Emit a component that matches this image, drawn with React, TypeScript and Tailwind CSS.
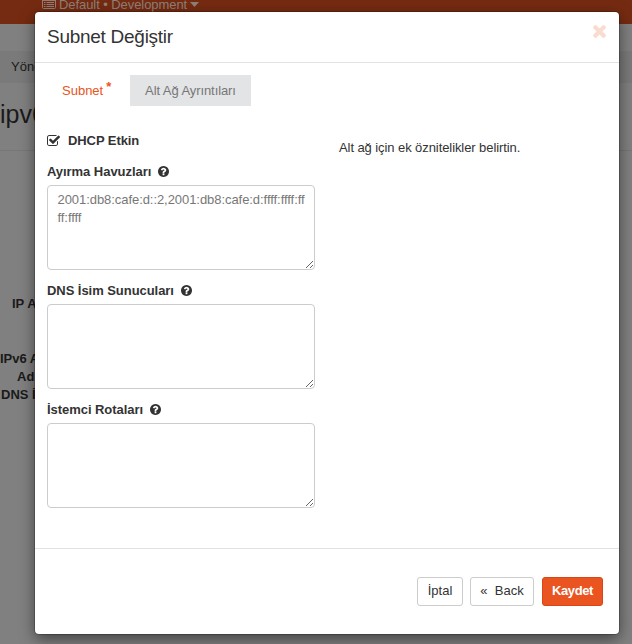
import React from "react";

const Question = () => (
  <svg viewBox="0 0 1536 1536" className="h-[11px] w-[11px] shrink-0" fill="currentColor">
    <path transform="translate(-128 -128)" d="M1024 1376v-192q0-14-9-23t-23-9h-192q-14 0-23 9t-9 23v192q0 14 9 23t23 9h192q14 0 23-9t9-23zm256-672q0-88-55.5-163t-138.5-116-170-41q-243 0-371 213-15 24 8 42l132 100q7 6 19 6 16 0 25-12 53-68 86-92 34-24 86-24 48 0 85.5 26t37.5 59q0 38-20 61t-68 45q-63 28-115.5 86.5t-52.5 125.5v36q0 14 9 23t23 9h192q14 0 23-9t9-23q0-19 21.5-49.5t54.5-49.5q32-18 49-28.5t46-35 44.5-48 28-60.5 12.5-81zm384 192q0 209-103 385.5t-279.5 279.5-385.5 103-385.5-103-279.5-279.5-103-385.5 103-385.5 279.5-279.5 385.5-103 385.5 103 279.5 279.5 103 385.5z" />
  </svg>
);

const CheckSquare = () => (
  <svg viewBox="0 0 1664 1408" className="h-[11px] w-[13px] shrink-0" fill="currentColor">
    <path transform="translate(-64 -128)" d="M1472 930v318q0 119-84.5 203.5t-203.5 84.5h-832q-119 0-203.5-84.5t-84.5-203.5v-832q0-119 84.5-203.5t203.5-84.5h832q63 0 117 25 15 7 18 23 3 17-9 29l-49 49q-10 10-23 10-3 0-9-2-23-6-45-6h-832q-66 0-113 47t-47 113v832q0 66 47 113t113 47h832q66 0 113-47t47-113v-254q0-13 9-22l64-64q10-10 23-10 6 0 12 3 20 8 20 29zm231-489l-814 814q-24 24-57 24t-57-24l-430-430q-24-24-24-57t24-57l110-110q24-24 57-24t57 24l263 263 647-647q24-24 57-24t57 24l110 110q24 24 24 57t-24 57z" />
  </svg>
);

const Close = () => (
  <svg viewBox="302 302 1188 1188" className="h-[13px] w-[13px]" fill="#fadbd0">
    <path d="M1490 1322q0 40-28 68l-136 136q-28 28-68 28t-68-28l-294-294-294 294q-28 28-68 28t-68-28l-136-136q-28-28-28-68t28-68l294-294-294-294q-28-28-28-68t28-68l136-136q28-28 68-28t68 28l294 294 294-294q28-28 68-28t68 28l136 136q28 28 28 68t-28 68l-294 294 294 294q28 28 28 68z" transform="translate(0 -64)" />
  </svg>
);

const ListIcon = () => (
  <svg viewBox="0 0 14 10" className="h-2.5 w-3.5" fill="none" stroke="currentColor">
    <rect x="0.5" y="-1.5" width="13" height="10" rx="1" />
    <path d="M0 0.5h14M2 2.5h1.5M4.5 2.5H12M2 4.5h1.5M4.5 4.5H12M2 6.5h1.5M4.5 6.5H12" />
  </svg>
);

function Field({ label, width, value }: { label: string; width: string; value?: string }) {
  return (
    <div className="h-[119px]">
      <div className="flex h-[23px] items-start gap-[7px] text-[13px] leading-[20px] font-bold">
        <span className={"whitespace-nowrap tracking-[-0.05px] " + width}>{label}</span>
        <span className="pt-[4px] leading-none"><Question /></span>
      </div>
      <textarea
        readOnly
        defaultValue={value}
        className="block h-[85px] w-[268px] resize overflow-auto rounded-[4px] border border-[#ccc] bg-white py-[5px] pr-[8px] pl-[9.5px] text-[13px] leading-[18px] tracking-[-0.06px] break-all text-[#777] outline-none"
      />
    </div>
  );
}

export default function App() {
  return (
    <div className="relative h-[644px] w-[632px] overflow-hidden bg-[#808080] font-['Liberation_Sans',Arial,sans-serif] text-[13px] leading-[18px] text-[#1a1a1a]">
      <div className="h-6 bg-[#752b11] pl-[42px] text-[#8e8079]">
        <div className="flex h-3 items-start">
          <ListIcon />
          <span className="-mt-[4px] ml-[3px] whitespace-nowrap tracking-[-0.07px]">Default • Development</span>
          <svg viewBox="0 0 8 4" className="mt-[2px] ml-[3px] h-[5px] w-[9px]" fill="currentColor" preserveAspectRatio="none"><path d="M0 0h8L4 4z" /></svg>
        </div>
      </div>
      <div className="h-[27px]" />
      <div className="h-8 bg-[#7a7a7a] pt-[7px] pl-[11px]">Yönetici</div>
      <div className="h-[68px] border-b border-[#777] pt-[17px] text-[25px] leading-[28px]">ipv6</div>
      <div className="pt-[144px] font-bold">
        <div className="h-[55px] pl-3">IP Adresi</div>
        <div className="h-[18px]">IPv6 Adres</div>
        <div className="h-[18px] pl-[17px]">Adı</div>
        <div className="h-[18px] pl-px">DNS İsim</div>
      </div>

      <div className="absolute top-3 left-[35px] flex h-[622px] w-[584px] flex-col rounded-[4px] bg-white text-[#333] shadow-[0_5px_15px_rgba(0,0,0,0.5),0_0_0_1px_rgba(0,0,0,0.2)]">
        <div className="flex h-[51px] justify-between border-b border-[#e1e2e3] pr-[13px] pl-[12px]">
          <h4 className="pt-[14px] text-[19px] leading-[22px] tracking-[-0.27px]">Subnet Değiştir</h4>
          <div className="pt-[13px]"><Close /></div>
        </div>
        <div className="h-[486px] border-b border-[#e1e2e3] px-3 pt-3">
          <div className="flex h-[31px]">
            <div className="w-[83px] pt-[7px] pl-[15px] whitespace-nowrap text-[#e95420]">
              Subnet<span className="ml-[3px] inline-block -translate-y-[4px] font-bold">*</span>
            </div>
            <div className="w-[121px] bg-[#e2e4e6] pt-[7px] text-center tracking-[-0.08px] whitespace-nowrap text-[#777]">Alt Ağ Ayrıntıları</div>
          </div>
          <div className="flex pt-[25px]">
            <div className="w-[292px]">
              <div className="flex h-[31px] items-start leading-[20px] font-bold">
                <span className="pt-[4px]"><CheckSquare /></span>
                <span className="ml-[8px] tracking-[-0.08px]">DHCP Etkin</span>
              </div>
              <Field label="Ayırma Havuzları" width="w-[104px]" value="2001:db8:cafe:d::2,2001:db8:cafe:d:ffff:ffff:ffff:ffff" />
              <Field label="DNS İsim Sunucuları" width="w-[127px]" />
              <Field label="İstemci Rotaları" width="w-[96px]" />
            </div>
            <p className="pt-[8px] tracking-[-0.08px] whitespace-nowrap">Alt ağ için ek öznitelikler belirtin.</p>
          </div>
        </div>
        <div className="flex justify-end pt-[28px] pr-4">
          <button className="h-[29px] w-[46px] rounded-[3px] border border-[#ccc] pb-[2px]">İptal</button>
          <button className="ml-[7px] h-[29px] w-[64px] rounded-[3px] border border-[#ccc] pb-[2px] whitespace-pre">«  Back</button>
          <button className="ml-[8px] h-[29px] w-[61px] rounded-[3px] border border-[#d84615] bg-[#e95420] pb-[2px] font-bold tracking-[-0.4px] text-white">Kaydet</button>
        </div>
      </div>
    </div>
  );
}
